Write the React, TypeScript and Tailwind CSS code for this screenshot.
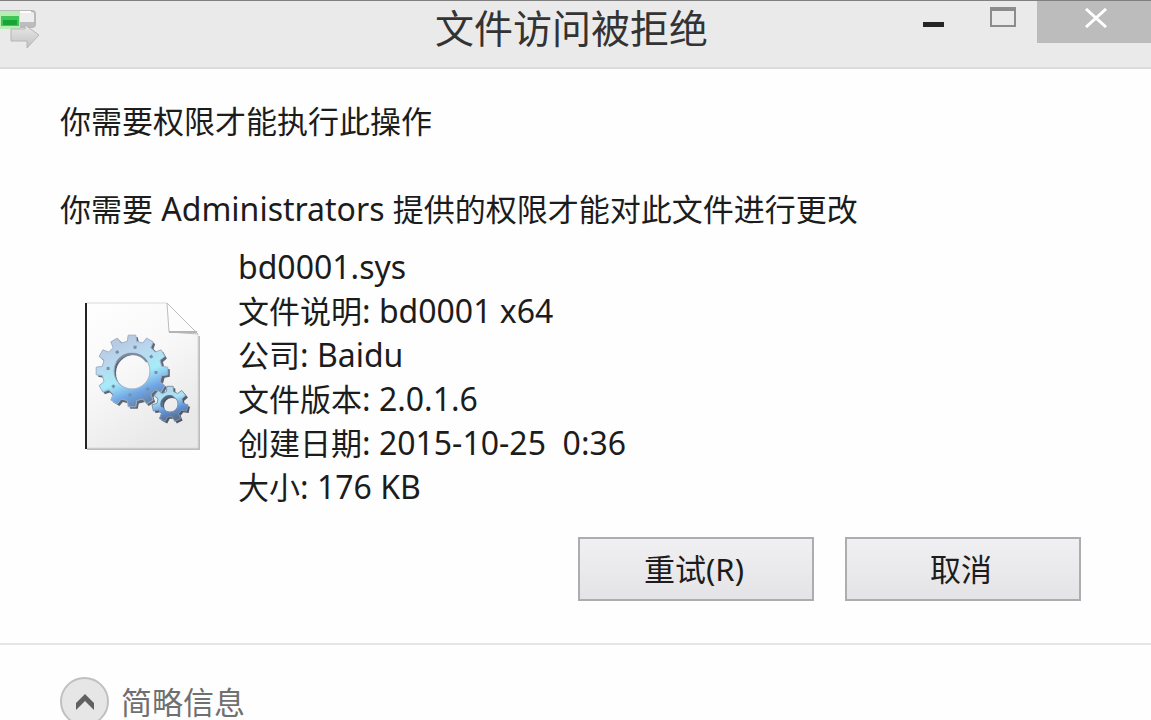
interface Detail {
  label?: string;
  value: string;
}

const details: Detail[] = [
  { value: 'bd0001.sys' },
  { label: '文件说明', value: 'bd0001 x64' },
  { label: '公司', value: 'Baidu' },
  { label: '文件版本', value: '2.0.1.6' },
  { label: '创建日期', value: '2015-10-25  0:36' },
  { label: '大小', value: '176 KB' },
];

// Outline of a gear followed by its hole, to be filled with the evenodd rule
function gearPath(cx: number, cy: number, outer: number, root: number, hole: number, teeth: number) {
  const step = (Math.PI * 2) / teeth;
  const points: string[] = [];

  for (let i = 0; i < teeth; i++) {
    const angle = i * step - Math.PI / 2;
    const corners = [
      [root, -0.3],
      [outer, -0.2],
      [outer, 0.2],
      [root, 0.3],
    ];
    corners.forEach(([r, offset]) => {
      const a = angle + offset * step;
      points.push(`${(cx + r * Math.cos(a)).toFixed(1)} ${(cy + r * Math.sin(a)).toFixed(1)}`);
    });
  }

  return (
    `M${points.join('L')}Z` +
    `M${cx - hole} ${cy}a${hole} ${hole} 0 1 0 ${hole * 2} 0a${hole} ${hole} 0 1 0 ${-hole * 2} 0Z`
  );
}

function TransferIcon() {
  return (
    <svg className="h-12 w-10" viewBox="0 0 40 48" fill="none" aria-hidden="true">
      <defs>
        <linearGradient id="arrow" x1="0" y1="0" x2="0" y2="1">
          <stop offset="0" stopColor="#e8e8e8" />
          <stop offset="1" stopColor="#c2c2c2" />
        </linearGradient>
      </defs>
      <path d="M0 10H32Q35 10 35 13V23Q35 26 32 26H0Z" fill="#eeeeee" stroke="#b9b9b9" strokeWidth="2" />
      <path d="M0 11H31" stroke="#ffffff" strokeWidth="2" />
      <path d="M20 21H34V25H20Z" fill="#bdbdbd" />
      <rect x="0" y="10" width="20" height="18" fill="#b5edb2" />
      <rect x="1" y="15" width="18" height="10" fill="#43c459" />
      <rect x="3" y="19" width="14" height="5" fill="#16a536" />
      <path d="M11 28H25V24L39 34L27 47V40H11Z" fill="url(#arrow)" stroke="#b6b6b6" strokeWidth="1" />
    </svg>
  );
}

function SystemFileIcon() {
  return (
    <svg className="h-[150px] w-[118px] shrink-0" viewBox="0 0 118 150" fill="none" aria-hidden="true">
      <defs>
        <linearGradient id="paper" x1="0" y1="0" x2="0.5" y2="1">
          <stop offset="0" stopColor="#ffffff" />
          <stop offset="0.5" stopColor="#f8f8f8" />
          <stop offset="1" stopColor="#e9e9e9" />
        </linearGradient>
        <linearGradient id="gear" x1="0.2" y1="0" x2="0.6" y2="1">
          <stop offset="0" stopColor="#b9c2dc" />
          <stop offset="0.35" stopColor="#b8d9ef" />
          <stop offset="0.6" stopColor="#a6ecf8" />
          <stop offset="0.82" stopColor="#70a5e6" />
          <stop offset="1" stopColor="#63809f" />
        </linearGradient>
        <linearGradient id="gearSmall" x1="0" y1="0" x2="0.3" y2="1">
          <stop offset="0" stopColor="#b8d0e6" />
          <stop offset="0.45" stopColor="#a9e3f5" />
          <stop offset="0.75" stopColor="#5e93dd" />
          <stop offset="1" stopColor="#5d6f8c" />
        </linearGradient>
      </defs>
      <path d="M3 147H115V34" stroke="#bdbdbd" strokeWidth="2" />
      <path d="M2 1H83L114 32V146H2Z" fill="url(#paper)" stroke="#dadada" strokeWidth="1" />
      <path d="M83 1L85 30L114 32Z" fill="#fcfcfc" stroke="#bcbcbc" strokeWidth="1" />
      <path d="M85 30H113" stroke="#b4b4b4" strokeWidth="2" />
      <rect x="1" y="1" width="2" height="146" fill="#242424" />
      <g strokeLinejoin="round" fillRule="evenodd">
        <path d={gearPath(50, 71, 36, 31, 18, 12)} fill="#5b6878" />
        <path d={gearPath(48, 69, 36, 30, 18, 12)} fill="url(#gear)" stroke="#9fb0c8" strokeWidth="1" />
        <path d="M33 60A18 18 0 0 1 63 60" stroke="#7f8b9c" strokeWidth="2" />
        <circle cx="48" cy="69" r="24" stroke="#7690ab" strokeWidth="3" strokeDasharray="3 16" />
        <path d={gearPath(88, 104, 18, 13, 8, 7)} fill="#4c5869" />
        <path d={gearPath(86, 102, 18, 13, 8, 7)} fill="url(#gearSmall)" stroke="#8193ab" strokeWidth="1" />
        <path d="M78 105A8 8 0 0 1 89 95" stroke="#596981" strokeWidth="2" />
      </g>
    </svg>
  );
}

function TitleBar() {
  return (
    <header className="grid h-[69px] shrink-0 grid-cols-[1fr_auto_1fr] items-start border-t border-b-2 border-t-[#808080] border-b-[#dcdcdc] bg-[#eaeaea]">
      <TransferIcon />
      <h1 className="pt-0.5 pr-2 text-[39px] leading-[50px] text-[#333333]">文件访问被拒绝</h1>
      <div className="flex justify-end">
        <button type="button" aria-label="最小化" className="flex h-[42px] w-[70px] justify-center pt-[21px]">
          <span className="h-[5px] w-[21px] bg-[#262626]" />
        </button>
        <button type="button" aria-label="最大化" className="flex h-[42px] w-[69px] justify-center pt-[6px]">
          <span className="h-[20px] w-[26px] border-2 border-t-4 border-[#8c8c8c]" />
        </button>
        <button type="button" aria-label="关闭" className="flex h-[42px] w-[114px] justify-center bg-[#bcbcbc] pt-[7px] pl-1 text-white">
          <svg className="h-[20px] w-[22px]" viewBox="0 0 22 20" fill="none" aria-hidden="true">
            <path d="M1 1L21 19M21 1L1 19" stroke="currentColor" strokeWidth="3" />
          </svg>
        </button>
      </div>
    </header>
  );
}

function DialogButton({ children }: { children: string }) {
  return (
    <button
      type="button"
      className="h-16 w-[236px] border-2 border-[#adacb0] bg-linear-to-b from-[#f0eff1] to-[#e4e3e6] pr-1 text-[31px] leading-[44px]"
    >
      {children}
    </button>
  );
}

export default function App() {
  return (
    <div className="flex h-screen flex-col overflow-hidden bg-[#fefefe] font-['Noto_Sans','Noto_Sans_CJK_SC',sans-serif] text-[31px] leading-[44px] text-[#1c1c1c]">
      <TitleBar />

      <main className="shrink-0 pt-[30px] pb-[42px] pl-[60px] pr-[70px]">
        <p>你需要权限才能执行此操作</p>
        <p className="mt-11">
          你需要<span className="text-[32px]"> Administrators </span>提供的权限才能对此文件进行更改
        </p>

        <div className="mt-[14px] flex items-center gap-[36px] pl-6">
          <SystemFileIcon />
          <ul className="text-[32px]">
            {details.map((item) => (
              <li key={item.value} className="whitespace-pre">
                {item.label && <span className="text-[31px]">{item.label}</span>}
                {item.label ? `: ${item.value}` : item.value}
              </li>
            ))}
          </ul>
        </div>

        <div className="mt-7 flex justify-end gap-[31px]">
          <DialogButton>重试(R)</DialogButton>
          <DialogButton>取消</DialogButton>
        </div>
      </main>

      <footer className="shrink-0 border-t-2 border-[#e6e6e6] px-[60px] pt-8">
        <button type="button" className="flex items-center gap-3 leading-8 text-[#707070]">
          <span className="flex size-[49px] items-center justify-center rounded-full border-2 border-[#c0c0c0] bg-[#e6e6e6]">
            <svg className="h-4 w-[18px]" viewBox="0 0 18 16" aria-hidden="true">
              <path d="M9 0L18 9V16L9 7L0 16V9Z" fill="#606060" />
            </svg>
          </span>
          简略信息
        </button>
      </footer>
    </div>
  );
}
